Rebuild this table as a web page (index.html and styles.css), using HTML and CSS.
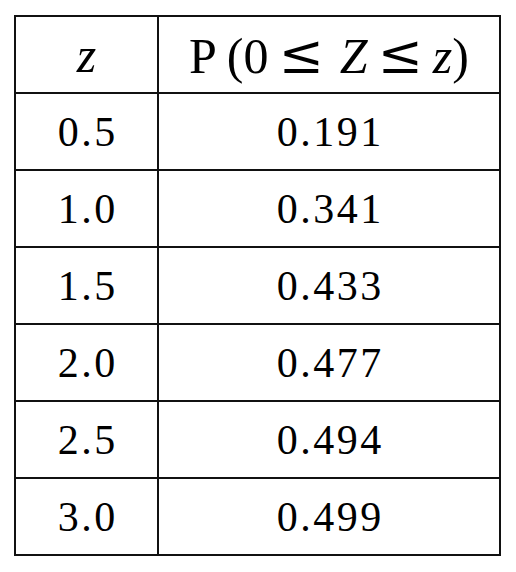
FILE: index.html
```html
<!DOCTYPE html>
<html lang="en">
<head>
    <meta charset="UTF-8">
    <title>Standard Normal Table</title>
    <link rel="stylesheet" href="styles.css">
</head>
<body>
    <table class="z-table">
        <thead>
            <tr>
                <th class="col-z"><i>z</i></th>
                <th class="col-p"><span>P</span><span class="paren">(</span><span>0</span><span class="rel">≤</span><i class="big-z">Z</i><span class="rel rel-2">≤</span><i>z</i><span>)</span></th>
            </tr>
        </thead>
        <tbody>
            <tr><td>0.5</td><td>0.191</td></tr>
            <tr><td>1.0</td><td>0.341</td></tr>
            <tr><td>1.5</td><td>0.433</td></tr>
            <tr><td>2.0</td><td>0.477</td></tr>
            <tr><td>2.5</td><td>0.494</td></tr>
            <tr><td>3.0</td><td>0.499</td></tr>
        </tbody>
    </table>
</body>
</html>
```

FILE: styles.css
```css
body {
    margin: 0;
    background: #fff;
    font-family: "Liberation Serif", "DejaVu Serif", serif;
    color: #000;
}

.z-table {
    margin: 15px 0 0 14px;
    width: 487px;
    border-collapse: collapse;
    table-layout: fixed;
}

.z-table th,
.z-table td {
    border: 2px solid #111;
    height: 75px;
    padding: 0;
    text-align: center;
    vertical-align: middle;
    font-weight: normal;
}

.z-table td {
    font-size: 42px;
    letter-spacing: 2.5px;
    padding-left: 2.5px;
}

.z-table th {
    font-size: 50px;
    white-space: nowrap;
}

.col-z {
    width: 141px;
}

.z-table i {
    font-style: italic;
}

.paren {
    margin-left: 10px;
}

.rel {
    font-family: "DejaVu Serif", serif;
    font-size: 54px;
    margin: 0 8px 0 10px;
}

.big-z {
    margin-left: 8px;
}

.rel-2 {
    margin: 0 10px 0 10px;
}
```
